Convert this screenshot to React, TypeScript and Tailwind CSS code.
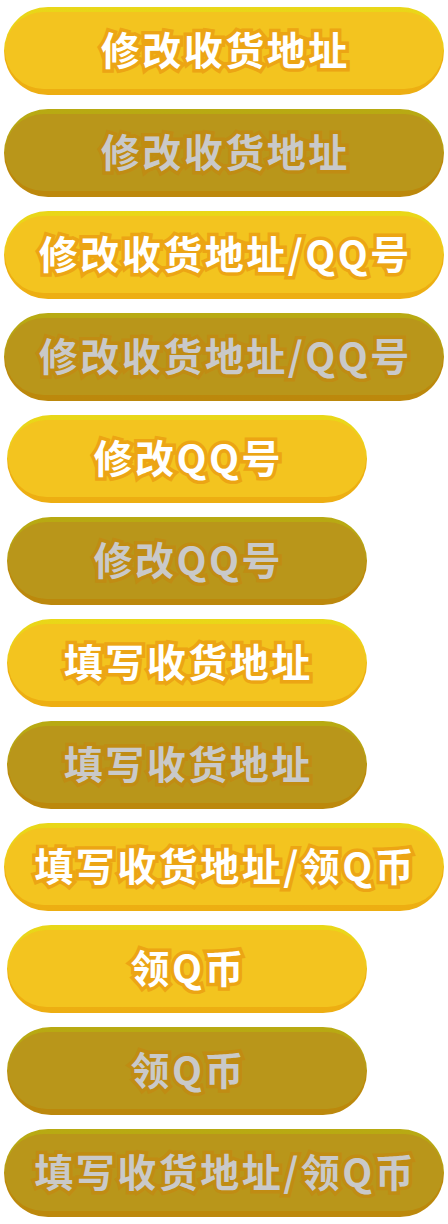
import React from "react";

type Btn = { label: string; wide: boolean; disabled: boolean };

const buttons: Btn[] = [
  { label: "修改收货地址", wide: true, disabled: false },
  { label: "修改收货地址", wide: true, disabled: true },
  { label: "修改收货地址/QQ号", wide: true, disabled: false },
  { label: "修改收货地址/QQ号", wide: true, disabled: true },
  { label: "修改QQ号", wide: false, disabled: false },
  { label: "修改QQ号", wide: false, disabled: true },
  { label: "填写收货地址", wide: false, disabled: false },
  { label: "填写收货地址", wide: false, disabled: true },
  { label: "填写收货地址/领Q币", wide: true, disabled: false },
  { label: "领Q币", wide: false, disabled: false },
  { label: "领Q币", wide: false, disabled: true },
  { label: "填写收货地址/领Q币", wide: true, disabled: true },
];

function GameButton({ label, wide, disabled }: Btn) {
  const outer = disabled
    ? "bg-[linear-gradient(to_bottom,#b8aa12_0%,#b8a414_45%,#bc8a0c_55%,#bc880c_100%)]"
    : "bg-[linear-gradient(to_bottom,#e9d718_0%,#ecd11a_45%,#edb013_55%,#edae12_100%)]";
  const inner = disabled ? "bg-[#b9961a]" : "bg-[#f3c41f]";
  const text = disabled
    ? "text-[#c9c9c9] [-webkit-text-stroke:7px_#c08c13]"
    : "text-white [-webkit-text-stroke:7px_#eca514]";
  return (
    <div
      className={`${wide ? "w-[440px] ml-[4px]" : "w-[360px] ml-[7px]"} h-[88px] rounded-full ${outer} pt-[5px] pb-[6px] px-[1px]`}
    >
      <div
        className={`h-full w-full rounded-full ${inner} flex items-center justify-center pb-[4px]`}
      >
        <span
          className={`${text} [paint-order:stroke_fill] text-[39px] font-bold tracking-[2.5px] leading-none font-['Noto_Sans_CJK_SC','Noto_Sans',sans-serif] pl-[2.5px]`}
        >
          {label}
        </span>
      </div>
    </div>
  );
}

export default function App() {
  return (
    <div className="w-[448px] h-[1224px] bg-white pt-[7px] flex flex-col gap-[14px]">
      {buttons.map((b, i) => (
        <GameButton key={i} {...b} />
      ))}
    </div>
  );
}
